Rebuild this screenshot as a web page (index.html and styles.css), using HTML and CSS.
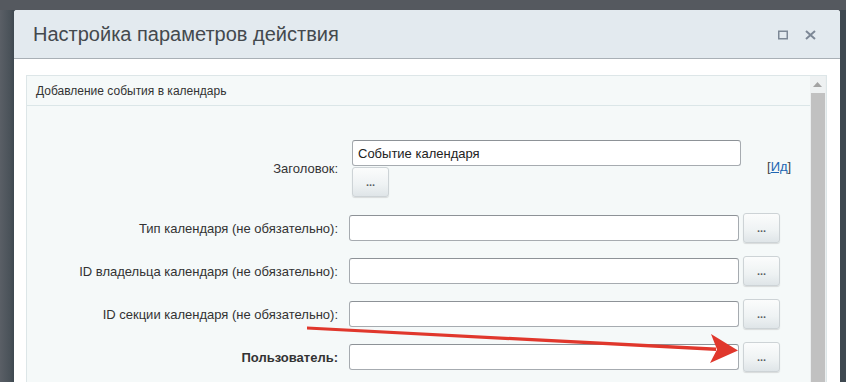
FILE: index.html
```html
<!DOCTYPE html>
<html lang="ru">
<head>
<meta charset="utf-8">
<title>Настройка параметров действия</title>
<link rel="stylesheet" href="styles.css">
</head>
<body>
<div class="page">
  <div class="dialog">
    <div class="dlg-head">
      <div class="dlg-title">Настройка параметров действия</div>
      <div class="dlg-tools">
        <svg class="tool" width="10" height="10" viewBox="0 0 10 10"><rect x="0.75" y="1.25" width="8.5" height="7.5" fill="none" stroke="#7d8896" stroke-width="1.5"/></svg>
        <svg class="tool" width="11" height="10" viewBox="0 0 11 10"><path d="M1 1 L10 9 M10 1 L1 9" stroke="#7d8896" stroke-width="2" fill="none"/></svg>
      </div>
    </div>
    <div class="dlg-body">
      <div class="panel">
        <div class="panel-main">
          <div class="panel-title">Добавление события в календарь</div>
          <div class="form">
            <div class="row row-first">
              <div class="label">Заголовок:</div>
              <div class="field field-first">
                <div class="stack">
                  <div class="input input-first">Событие календаря</div>
                  <div class="btn">...</div>
                </div>
                <div class="idlink">[<a href="#">Ид</a>]</div>
              </div>
            </div>
            <div class="row">
              <div class="label">Тип календаря (не обязательно):</div>
              <div class="field"><div class="input"></div><div class="btn">...</div></div>
            </div>
            <div class="row">
              <div class="label">ID владельца календаря (не обязательно):</div>
              <div class="field"><div class="input"></div><div class="btn">...</div></div>
            </div>
            <div class="row">
              <div class="label">ID секции календаря (не обязательно):</div>
              <div class="field"><div class="input"></div><div class="btn">...</div></div>
            </div>
            <div class="row row-last">
              <div class="label label-bold">Пользователь:</div>
              <div class="field"><div class="input"></div><div class="btn">...</div></div>
            </div>
          </div>
        </div>
        <div class="scrollbar">
          <div class="sb-arrow"><svg width="9" height="5" viewBox="0 0 9 5"><path d="M0 5 L4.5 0 L9 5 Z" fill="#a3a3a3"/></svg></div>
          <div class="sb-thumb"></div>
        </div>
      </div>
    </div>
  </div>
  <svg class="arrow" width="846" height="382" viewBox="0 0 846 382">
    <path d="M307 326.5 L716 347.5 L716 351 L307 329.5 Z" fill="#e0372c"/>
    <path d="M738 350.5 L711 334 L717 349.5 L710 363 Z" fill="#e0372c"/>
  </svg>
</div>
</body>
</html>
```
FILE: styles.css
```css
* { box-sizing: border-box; }
html, body { margin: 0; padding: 0; }
body {
  width: 846px;
  height: 382px;
  overflow: hidden;
  font-family: "Liberation Sans", Arial, sans-serif;
  background: linear-gradient(to bottom, #55595f 0, #55595f 10px, transparent 10px),
              linear-gradient(to right, #5a5f66 0, #4a5259 10px, #3e4850 14px, #3e4850 100%);
}
.page {
  position: relative;
  width: 846px;
  height: 382px;
  padding: 10px 0 0 14px;
  overflow: hidden;
}
.dialog {
  width: 826px;
  height: 372px;
  background: #fff;
  border-radius: 3px 3px 0 0;
  overflow: hidden;
}
.dlg-head {
  height: 49px;
  background: #e3eaef;
  border-bottom: 1px solid #a9b0b6;
  display: flex;
  align-items: center;
  justify-content: space-between;
  padding: 0 19px 0 19px;
}
.dlg-title {
  font-size: 20px;
  color: #44494e;
  padding-top: 1px;
}
.dlg-tools {
  display: flex;
  align-items: center;
  gap: 17px;
  padding-top: 2px;
  padding-right: 5px;
}
.tool { display: block; }
.dlg-body {
  padding: 16px 13px 0 12px;
}
.panel {
  border: 1px solid #dde6e8;
  border-bottom: 0;
  background: #f5f9f9;
  display: flex;
  height: 307px;
  overflow: hidden;
}
.panel-main {
  flex: 1;
}
.panel-title {
  height: 30px;
  border-bottom: 1px solid #dbe6e8;
  font-size: 12px;
  color: #333;
  padding: 8px 0 0 9px;
}
.form {
  padding-top: 34px;
}
.row {
  display: flex;
  align-items: center;
  height: 30px;
  margin-bottom: 13px;
}
.row-first {
  height: 57px;
  margin-bottom: 16px;
}
.row-last { margin-bottom: 0; }
.label {
  width: 312px;
  text-align: right;
  font-size: 13px;
  color: #333;
  padding-right: 1px;
}
.label-bold { font-weight: bold; }
.field {
  margin-left: 10px;
  display: flex;
  align-items: center;
  gap: 4px;
}
.field-first {
  margin-left: 13px;
  gap: 26px;
}
.stack {
  display: flex;
  flex-direction: column;
  gap: 1px;
}
.input {
  width: 390px;
  height: 26px;
  background: #fff;
  border: 1px solid #a6abb0;
  border-top-color: #8d9297;
  border-radius: 3px;
  font-size: 13px;
  color: #222;
  padding: 5px 0 0 5px;
}
.input-first { width: 389px; }
.btn {
  width: 37px;
  height: 30px;
  border: 1px solid #cdd3d6;
  border-radius: 3px;
  background: linear-gradient(to bottom, #fbfcfc 0%, #eef2f3 60%, #dfe5e8 100%);
  box-shadow: 0 1px 1px rgba(0,0,0,0.12);
  font-size: 11px;
  font-weight: bold;
  color: #5a5f64;
  text-align: center;
  line-height: 28px;
}
.idlink {
  font-size: 13px;
  color: #444;
  margin-top: -4px;
}
.idlink a { color: #2066b3; text-decoration: underline; }
.scrollbar {
  width: 16px;
  background: #eceff0;
  display: flex;
  flex-direction: column;
  padding: 0 1px 0 0;
}
.sb-arrow {
  height: 17px;
  display: flex;
  align-items: center;
  justify-content: center;
  background: #eef1f2;
}
.sb-thumb {
  flex: 1;
  background: #c1c1c1;
  margin-left: 1px;
}
.arrow {
  position: absolute;
  left: 0;
  top: 0;
  pointer-events: none;
}
```
